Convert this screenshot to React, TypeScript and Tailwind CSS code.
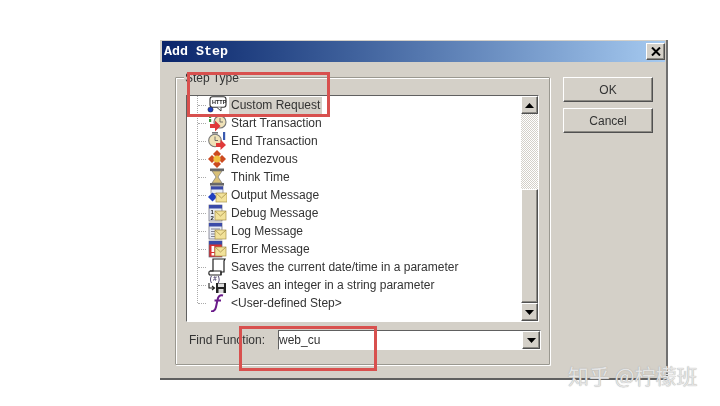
import React from "react";

const Env = ({ x = 8, y = 7 }: { x?: number; y?: number }) => (
  <g transform={`translate(${x} ${y})`}>
    <rect x="0" y="0" width="11" height="9" fill="#f2e29a" stroke="#a8924a" strokeWidth="0.7" />
    <path d="M0 0 L5.5 5 L11 0" fill="none" stroke="#a8924a" strokeWidth="0.8" />
  </g>
);

const Win = () => (
  <g>
    <rect x="2" y="1" width="13" height="16" fill="#e8ecf4" stroke="#667" strokeWidth="0.7" />
    <rect x="2" y="1" width="13" height="3.5" fill="#3a4aa8" />
  </g>
);

const icons: Record<string, React.ReactNode> = {
  http: (
    <>
      <rect x="3" y="0.8" width="16" height="10.5" rx="2.5" fill="#fff" stroke="#333" strokeWidth="1.1" />
      <text x="5" y="8" fontSize="5.5" fontWeight="700" fontFamily="'Liberation Sans', sans-serif" fill="#222">
        HTTP
      </text>
      <path d="M10 11.5 L14 15 L14 11.5" fill="#fff" stroke="#333" strokeWidth="0.9" />
      <circle cx="3.5" cy="13.5" r="2.6" fill="#1f3fc0" stroke="#222" strokeWidth="0.5" />
    </>
  ),
  start: (
    <>
      <circle cx="13" cy="8" r="6" fill="#efe2b8" stroke="#777" strokeWidth="1.1" />
      <path d="M13 4 V8 H16" fill="none" stroke="#555" strokeWidth="0.8" />
      <rect x="2" y="0" width="2.2" height="4" fill="#3c9a3c" />
      <rect x="2" y="5" width="2.2" height="3" fill="#3c9a3c" />
      <path d="M3 10 H8 V6.5 L13.5 12 L8 17.5 V14 H3 Z" fill="#e03a3a" />
    </>
  ),
  end: (
    <>
      <circle cx="8" cy="8.5" r="6.3" fill="#efe2b8" stroke="#777" strokeWidth="1.1" />
      <path d="M8 4.5 V8.5 H11" fill="none" stroke="#555" strokeWidth="0.8" />
      <rect x="5" y="0" width="6" height="1.6" fill="#777" />
      <rect x="16" y="0" width="2.2" height="8" fill="#3a5ab0" />
      <path d="M9 11 H13.5 V7.5 L19 13 L13.5 18 V15 H9 Z" fill="#e03a3a" />
    </>
  ),
  rendezvous: (
    <>
      <path d="M10 0 L14 4 L10 8 L6 4 Z" fill="#cc4a20" />
      <path d="M10 10 L14 14 L10 18 L6 14 Z" fill="#cc4a20" />
      <path d="M1 9 L5 5 L9 9 L5 13 Z" fill="#cc4a20" />
      <path d="M11 9 L15 5 L19 9 L15 13 Z" fill="#cc4a20" />
      <circle cx="10" cy="9" r="3.6" fill="#f0c040" />
    </>
  ),
  time: (
    <>
      <rect x="3" y="0.5" width="14" height="2.6" fill="#666" />
      <rect x="3" y="15" width="14" height="2.6" fill="#666" />
      <path d="M5 3 H15 L11 9 L15 15 H5 L9 9 Z" fill="#d8c078" stroke="#777" strokeWidth="0.7" />
    </>
  ),
  output: (
    <>
      <rect x="4" y="0.5" width="12" height="7" fill="#e8ecf4" stroke="#667" strokeWidth="0.6" />
      <rect x="4" y="0.5" width="12" height="3" fill="#3a4aa8" />
      <path d="M1 11 L5.5 6.5 L10 11 L5.5 15.5 Z" fill="#1f3fc0" />
      <Env x={9} y={7} />
    </>
  ),
  debug: (
    <>
      <Win />
      <text x="3.5" y="10" fontSize="6" fontWeight="700" fontFamily="'Liberation Sans', sans-serif" fill="#222">
        1
      </text>
      <text x="3.5" y="16" fontSize="6" fontWeight="700" fontFamily="'Liberation Sans', sans-serif" fill="#222">
        2
      </text>
      <Env x={8} y={7} />
    </>
  ),
  log: (
    <>
      <Win />
      <path d="M4 7 H13 M4 9.5 H13 M4 12 H8 M4 14.5 H8" stroke="#778" strokeWidth="0.9" />
      <Env x={8} y={8} />
    </>
  ),
  error: (
    <>
      <rect x="2" y="1" width="13" height="16" fill="#d83030" stroke="#667" strokeWidth="0.7" />
      <rect x="2" y="1" width="13" height="3.5" fill="#3a4aa8" />
      <rect x="4.5" y="6" width="2.8" height="6" fill="#fff" />
      <rect x="4.5" y="13" width="2.8" height="2.5" fill="#fff" />
      <Env x={8} y={7} />
    </>
  ),
  date: (
    <>
      <path d="M6 1 H18 L17 3 V14 H14 V17 H3 C1.5 17 1.5 13 3 13 H6 Z" fill="#fff" stroke="#222" strokeWidth="1.2" />
      <path d="M3 13 H14 V17" fill="none" stroke="#222" strokeWidth="1.2" />
    </>
  ),
  integer: (
    <>
      <text x="2" y="4.5" fontSize="6.5" fontFamily="'Liberation Mono', monospace" fontWeight="700" fill="#443a66">
        (#)
      </text>
      <path d="M2 7 V12 H7 M5 10 L7.5 12 L5 14" fill="none" stroke="#222" strokeWidth="1.1" />
      <rect x="9" y="7" width="10" height="10" fill="#222" />
      <rect x="11" y="7.5" width="6" height="3.5" fill="#ddd" />
      <rect x="11.5" y="13" width="5" height="4" fill="#ddd" />
    </>
  ),
  user: (
    <path d="M16 1.5 C12.5 0.5 11 3 10.5 6 L9 13 C8.6 15.5 7 17.5 4 17.5 M7.5 6.5 H14" fill="none" stroke="#6a1b8a" strokeWidth="2" />
  ),
};

const steps = [
  { icon: "http", label: "Custom Request", selected: true },
  { icon: "start", label: "Start Transaction" },
  { icon: "end", label: "End Transaction" },
  { icon: "rendezvous", label: "Rendezvous" },
  { icon: "time", label: "Think Time" },
  { icon: "output", label: "Output Message" },
  { icon: "debug", label: "Debug Message" },
  { icon: "log", label: "Log Message" },
  { icon: "error", label: "Error Message" },
  { icon: "date", label: "Saves the current date/time in a parameter" },
  { icon: "integer", label: "Saves an integer in a string parameter" },
  { icon: "user", label: "<User-defined Step>" },
];

const bevel = "border border-t-white border-l-white border-r-[#505050] border-b-[#505050] bg-[#d4d0c8] shadow-[inset_-1px_-1px_0_#8c8a84]";

const Arrow = ({ up = false }: { up?: boolean }) => (
  <svg width="9" height="5" viewBox="0 0 9 5">
    <path d={up ? "M4.5 0 L9 5 H0 Z" : "M0 0 H9 L4.5 5 Z"} fill="#000" />
  </svg>
);

function Row({ icon, label, selected }: { icon: string; label: string; selected?: boolean }) {
  return (
    <div className="flex h-[18px] items-center">
      <div className="w-[8px] border-t border-dotted border-[#aaa]" />
      <svg width="20" height="18" viewBox="0 0 20 18" className="ml-px shrink-0">
        {icons[icon]}
      </svg>
      <span className={`ml-[2px] px-[2px] leading-[17px] ${selected ? "bg-[#d4d0c8]" : ""}`}>{label}</span>
    </div>
  );
}

export default function App() {
  return (
    <div className="relative h-[406px] w-[720px] overflow-hidden bg-white pl-[160px] pt-[40px] font-['Liberation_Sans',sans-serif] text-[12px] text-[#333]">
      <div className="h-[340px] w-[508px] border-r-2 border-b-2 border-r-[#707070] border-b-[#606060] bg-[#d4d0c8] pb-px pl-[2px] pr-px pt-px blur-[0.4px]">
        <div className="flex h-[21px] items-center justify-between bg-gradient-to-r from-[#0a246a] to-[#a6caf0] pl-[2px]">
          <span className="font-['Liberation_Mono',monospace] text-[13.33px] font-bold text-white">Add Step</span>
          <button className={`flex h-[17px] w-[19px] items-center justify-center ${bevel}`}>
            <svg width="10" height="9" viewBox="0 0 10 9">
              <path d="M1 0.5 L9 8.5 M9 0.5 L1 8.5" stroke="#000" strokeWidth="2" />
            </svg>
          </button>
        </div>

        <div className="flex pl-[13px] pt-[15px]">
          <div className="relative h-[288px] w-[375px] rounded-[1px] border border-[#9a9890] shadow-[inset_1px_1px_0_#fff,1px_1px_0_#fff]">
            <span className="absolute left-[8px] top-[-7px] bg-[#d4d0c8] px-px leading-[15px]">Step Type</span>

            <div className="ml-[10px] mt-[17px] flex h-[227px] w-[353px] border border-t-[#606060] border-l-[#606060] border-r-white border-b-white bg-white">
              <div className="relative flex-1 pl-[11px]">
                <div className="absolute bottom-[18px] left-[10px] top-0 border-l border-dotted border-[#aaa]" />
                {steps.map((s) => (
                  <Row key={s.label} {...s} />
                ))}
              </div>
              <div className="flex w-[17px] flex-col">
                <div className={`flex h-[18px] items-center justify-center ${bevel}`}>
                  <Arrow up />
                </div>
                <div className="h-[75px] bg-[repeating-conic-gradient(#d4d0c8_0_25%,#fff_0_50%)] bg-[length:2px_2px]" />
                <div className={`flex-1 ${bevel}`} />
                <div className={`flex h-[18px] items-center justify-center ${bevel}`}>
                  <Arrow />
                </div>
              </div>
            </div>

            <div className="ml-[13px] mt-[8px] flex items-center">
              <span className="w-[89px]">Find Function:</span>
              <div className="flex h-[20px] w-[263px] items-center justify-between border border-t-[#606060] border-l-[#606060] border-r-white border-b-white bg-white">
                <span>web_cu</span>
                <div className={`flex h-[18px] w-[18px] items-center justify-center ${bevel}`}>
                  <Arrow />
                </div>
              </div>
            </div>
          </div>

          <div className="ml-[13px] flex w-[90px] flex-col gap-[6px]">
            <button className={`h-[25px] text-center ${bevel} border-[#404040] border-t-[#404040] border-l-[#404040]`}>OK</button>
            <button className={`h-[25px] text-center ${bevel}`}>Cancel</button>
          </div>
        </div>
      </div>

      <div className="absolute left-[187px] top-[72px] h-[45px] w-[143px] border-[3px] border-[#d8504e]" />
      <div className="absolute left-[239px] top-[326px] h-[45px] w-[138px] border-[3px] border-[#d8504e]" />
      <div className="absolute left-[568px] top-[361px] font-['Noto_Sans_CJK_SC',sans-serif] text-[21px] leading-[28px] text-[#e4e4e4] [text-shadow:0_0_1px_#999]">
        知乎 @柠檬班
      </div>
    </div>
  );
}
